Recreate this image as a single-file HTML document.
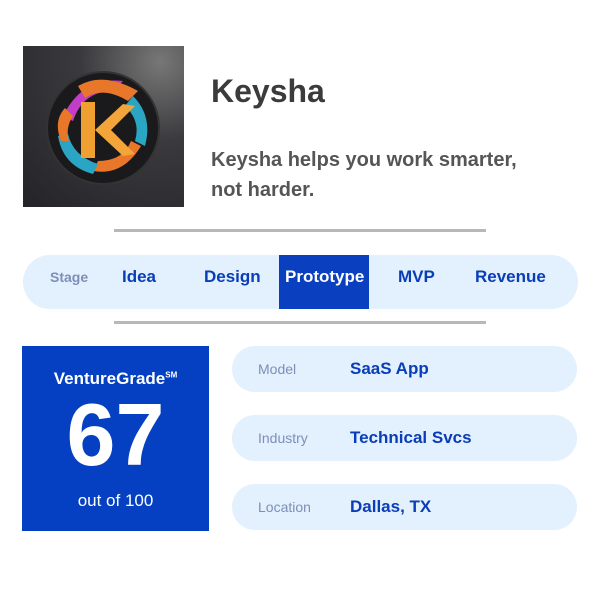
<!DOCTYPE html>
<html><head><style>
body{margin:0;width:600px;height:600px;background:#fff;font-family:"Liberation Sans",sans-serif;position:relative;overflow:hidden}
.a{position:absolute}
.pill{position:absolute;left:232px;width:345px;height:46px;background:#e3f0fd;border-radius:23px}
.pill .l{position:absolute;left:26px;top:15px;font-size:14px;color:#7d8fb8}
.pill .v{position:absolute;left:118px;top:13px;font-size:17px;font-weight:bold;color:#0a3db8}
.st{position:absolute;top:267px;font-size:17px;font-weight:bold;color:#0a3db8}
</style></head><body>
<div class="a" style="left:23px;top:46px;width:161px;height:161px;background:radial-gradient(circle at 85% 10%,#777 0%,#3a3a3e 40%,#242428 100%)">
<svg width="161" height="161" viewBox="0 0 161 161">
<circle cx="80" cy="82" r="56" fill="#1a1a1c" stroke="#333" stroke-width="2"/>
<path d="M40 70 Q60 30 100 35 L90 45 Q60 45 50 75Z" fill="#c23ec6"/>
<path d="M55 40 Q80 25 115 45 L105 55 Q80 40 62 52Z" fill="#e8772a"/>
<path d="M110 50 Q130 70 122 100 L112 95 Q118 75 102 60Z" fill="#2aa6c4"/>
<path d="M118 100 Q100 130 70 125 L75 115 Q100 115 108 95Z" fill="#e8772a"/>
<path d="M70 128 Q40 120 35 90 L45 88 Q50 110 75 118Z" fill="#2aa6c4"/>
<path d="M38 95 Q30 75 42 62 L50 70 Q42 82 46 95Z" fill="#e8772a"/>
<rect x="58" y="56" width="14" height="56" fill="#f0a030"/>
<path d="M72 84 L100 58 L112 60 L88 84 L112 108 L100 110Z" fill="#f3a53a"/>
</svg></div>
<div class="a" style="left:211px;top:73px;font-size:32px;font-weight:bold;color:#3b3b3b">Keysha</div>
<div class="a" style="left:211px;top:145px;font-size:20px;font-weight:bold;color:#555;line-height:30px">Keysha helps you work smarter,<br>not harder.</div>
<div class="a" style="left:114px;top:229px;width:372px;height:3px;background:#b8b8b8"></div>
<div class="a" style="left:23px;top:255px;width:555px;height:54px;background:#e3f0fd;border-radius:27px"></div>
<div class="a" style="left:279px;top:255px;width:90px;height:54px;background:#0a3fc0"></div>
<div class="st" style="left:50px;top:269px;font-size:14px;color:#7d8fb8;font-weight:bold">Stage</div>
<div class="st" style="left:122px">Idea</div>
<div class="st" style="left:204px">Design</div>
<div class="st" style="left:285px;color:#fff">Prototype</div>
<div class="st" style="left:398px">MVP</div>
<div class="st" style="left:475px">Revenue</div>
<div class="a" style="left:114px;top:321px;width:372px;height:3px;background:#b8b8b8"></div>
<div class="a" style="left:22px;top:346px;width:187px;height:185px;background:#0540c2;color:#fff;text-align:center">
<div style="margin-top:23px;font-size:17px;font-weight:bold">VentureGrade<sup style="font-size:8px">SM</sup></div>
<div style="font-size:88px;font-weight:bold;line-height:88px;margin-top:2px">67</div>
<div style="font-size:17px;margin-top:12px">out of 100</div>
</div>
<div class="pill" style="top:346px"><span class="l">Model</span><span class="v">SaaS App</span></div>
<div class="pill" style="top:415px"><span class="l">Industry</span><span class="v">Technical Svcs</span></div>
<div class="pill" style="top:484px"><span class="l">Location</span><span class="v">Dallas, TX</span></div>
</body></html>
